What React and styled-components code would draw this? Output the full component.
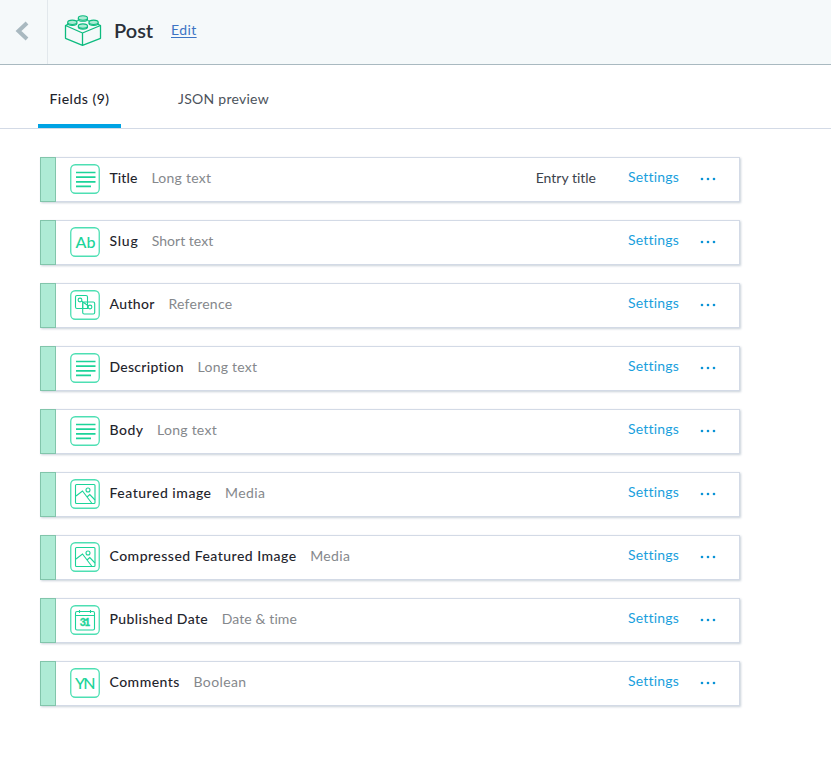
import React from "react";
import styled, { createGlobalStyle } from "styled-components";

const GlobalStyle = createGlobalStyle`
  * { box-sizing: border-box; }
  body {
    margin: 0;
    background: #fff;
    color: #2a3039;
    font-family: Lato, "Open Sans", sans-serif;
    font-size: 14px;
    font-variant-ligatures: none;
  }
`;

const Page = styled.div`
  min-height: 777px;
`;

const Header = styled.header`
  display: flex;
  height: 65px;
  background: #f5f9fa;
  border-bottom: 1px solid #a9b9c0;
`;

const BackButton = styled.button`
  width: 48px;
  padding: 0 0 3px 15px;
  border: 0;
  border-right: 1px solid #e2e8ec;
  background: transparent;
  display: flex;
  align-items: center;
`;

const Heading = styled.div`
  display: flex;
  align-items: center;
  padding: 0 0 3px 16px;
`;

const Title = styled.h1`
  margin: 0 0 2px 12px;
  width: 57px;
  font-size: 20px;
  line-height: 24px;
  font-weight: 600;
`;

const EditLink = styled.a`
  margin-bottom: 2px;
  color: #3c74c4;
  font-size: 14px;
  line-height: 20px;
  font-weight: 400;
  text-decoration: underline;
  text-underline-offset: 2px;
  letter-spacing: 0.4px;
`;

const Tabs = styled.nav`
  display: flex;
  height: 64px;
  padding-left: 38px;
  border-bottom: 1px solid #d3dae6;
`;

const Tab = styled.div`
  width: ${(p) => p.$width}px;
  margin-right: 42px;
  padding-top: 24px;
  text-align: center;
  line-height: 20px;
  white-space: nowrap;
  font-weight: ${(p) => (p.$active ? 500 : 400)};
  color: ${(p) => (p.$active ? "#1f252d" : "#4c535c")};
  border-bottom: ${(p) => (p.$active ? "4px solid #00a3e4" : "0")};
  letter-spacing: ${(p) => p.$track || 0}px;
`;

const FieldList = styled.ul`
  list-style: none;
  margin: 0;
  padding: 28px 0 0 40px;
  display: flex;
  flex-direction: column;
  gap: 18px;
`;

const FieldRow = styled.li`
  display: flex;
  align-items: center;
  width: 700px;
  height: 45px;
  border: 1px solid #d3dae6;
  border-left: 0;
  box-shadow: 1px 1px 2px rgba(90, 115, 140, 0.32);
  white-space: nowrap;
  line-height: 20px;
`;

const DragHandle = styled.div`
  align-self: stretch;
  width: 16px;
  margin: -1px 14px -1px 0;
  background: #aeebd5;
  border: 1px solid #82c5ab;
`;

const FieldName = styled.span`
  margin: 0 ${(p) => 14 - p.$track}px 3px 9.5px;
  color: #1f252d;
  font-weight: 500;
  letter-spacing: ${(p) => p.$track}px;
`;

const FieldType = styled.span`
  margin-bottom: 3px;
  color: #85888c;
  font-weight: 400;
  letter-spacing: ${(p) => p.$track}px;
`;

const Actions = styled.div`
  margin-left: auto;
  display: flex;
  align-items: center;
  padding-right: 23px;
`;

const EntryTitle = styled.span`
  margin: 0 32px 3px 0;
  color: #3c434c;
`;

const SettingsLink = styled.a`
  width: 72px;
  margin-bottom: 5px;
  color: #1a9fdd;
  letter-spacing: 0.2px;
`;

const IconBox = styled.svg`
  margin-bottom: 2px;
`;

const MoreIcon = styled.svg`
  margin-bottom: 1px;
`;

const IconText = styled.text`
  font-family: Lato, sans-serif;
  font-weight: ${(p) => p.$weight || 500};
  fill: #1bd499;
`;

const GREEN = "#1bd499";

const glyphs = {
  long: (
    <path stroke={GREEN} strokeWidth="1.700" d="M6 8.500h19.500M6 13.200h19.500M6 17.800h19.500M6 22.300h15" />
  ),
  short: <IconText x="5.500" y="20.800" fontSize="16" textLength="20">Ab</IconText>,
  bool: <IconText x="5" y="20.800" fontSize="16" textLength="20.500">YN</IconText>,
  ref: (
    <g stroke={GREEN} strokeWidth="1.100">
      <path d="M17.500 12V7a1.500 1.500 0 0 0-1.500-1.500H7A1.500 1.500 0 0 0 5.500 7v10A1.500 1.500 0 0 0 7 18.500h5.500" />
      <rect x="12.700" y="12" width="12" height="12" rx="1.500" />
      <circle cx="10" cy="10" r="1.900" />
      <circle cx="20" cy="17" r="1.900" />
      <path d="M11.500 11l7 5M12.700 12v6.500M17.500 12v6.500h-4.800" />
    </g>
  ),
  media: (
    <g stroke={GREEN} strokeWidth="1.100">
      <rect x="5.500" y="5.500" width="19.500" height="19" rx="1" />
      <circle cx="18" cy="11" r="2" />
      <path d="M6 17l6.500-5L22 24.500M17 18l2.800-2.500 5.200 5.500" />
    </g>
  ),
  date: (
    <g stroke={GREEN} strokeWidth="1.100">
      <rect x="5.500" y="6.500" width="19" height="18.500" rx="1.500" />
      <path d="M5.500 10.500h19M9.500 5v3M20.500 5v3" />
      <IconText x="9.800" y="21" fontSize="10.500" textLength="10.500" $weight={900} stroke="#1bd499" strokeWidth="0.300">31</IconText>
    </g>
  ),
};

const FieldIcon = ({ kind }) => (
  <IconBox width="30" height="30" viewBox="0 0 30 30" fill="none">
    <rect x="0.750" y="0.750" width="28.500" height="28.500" rx="4.500" stroke="#4edfb3" strokeWidth="1.300" />
    {glyphs[kind]}
  </IconBox>
);

const BrickIcon = () => (
  <svg width="38" height="32" viewBox="0 0 38 32" fill="none" stroke="#0dbb7f" strokeWidth="1.300" strokeLinejoin="round">
    <path d="M4 9.300L1.500 10.500v12.800L18.500 30.300l18-7V10.500l-3-1.300M1.500 10.500l17 7.500 18-7.500M18.500 18v12.300M14.300 5.500l-3 1M23.500 5.500l3 1" />
    <g fill="#aeebd5" strokeWidth="1.100">
      <path d="M14.300 3.200v1.300c0 2.400 9.200 2.400 9.200 0V3.200M3.700 7.500v1c0 2.500 9.200 2.500 9.200 0v-1M25 7.500v1c0 2.500 9.200 2.500 9.200 0v-1M14.300 11.200v1c0 2.500 9.200 2.500 9.200 0v-1" />
      <ellipse cx="18.900" cy="3" rx="4.600" ry="2.200" />
      <ellipse cx="8.300" cy="7.300" rx="4.600" ry="2.200" />
      <ellipse cx="29.600" cy="7.300" rx="4.600" ry="2.200" />
      <ellipse cx="18.900" cy="11.100" rx="4.600" ry="2.200" />
    </g>
  </svg>
);

const fields = [
  { name: "Title", type: "Long text", kind: "long", nameTrack: 0.1, typeTrack: 0.25, entry: true },
  { name: "Slug", type: "Short text", kind: "short", nameTrack: 0.75, typeTrack: 0.03 },
  { name: "Author", type: "Reference", kind: "ref", nameTrack: 0.35, typeTrack: 0.25 },
  { name: "Description", type: "Long text", kind: "long", nameTrack: 0.27, typeTrack: 0.25 },
  { name: "Body", type: "Long text", kind: "long", nameTrack: 0.5, typeTrack: 0.25 },
  { name: "Featured image", type: "Media", kind: "media", nameTrack: 0.52, typeTrack: 0.4 },
  { name: "Compressed Featured Image", type: "Media", kind: "media", nameTrack: 0.48, typeTrack: 0.4 },
  { name: "Published Date", type: "Date & time", kind: "date", nameTrack: 0.37, typeTrack: 0.1 },
  { name: "Comments", type: "Boolean", kind: "bool", nameTrack: 0.48, typeTrack: 0.4 },
];

export default function App() {
  return (
    <Page>
      <GlobalStyle />
      <Header>
        <BackButton aria-label="Back">
          <svg width="14" height="20" viewBox="0 0 14 20" fill="none">
            <path d="M12 2L3.500 10l8.500 8" stroke="#a9b9c0" strokeWidth="4" />
          </svg>
        </BackButton>
        <Heading>
          <BrickIcon />
          <Title>Post</Title>
          <EditLink>Edit</EditLink>
        </Heading>
      </Header>
      <Tabs>
        <Tab $active $width={83} $track={0.5}>Fields (9)</Tab>
        <Tab $width={121} $track={0.25}>JSON preview</Tab>
      </Tabs>
      <FieldList>
        {fields.map((f) => (
          <FieldRow key={f.name}>
            <DragHandle />
            <FieldIcon kind={f.kind} />
            <FieldName $track={f.nameTrack}>{f.name}</FieldName>
            <FieldType $track={f.typeTrack}>{f.type}</FieldType>
            <Actions>
              {f.entry && <EntryTitle>Entry title</EntryTitle>}
              <SettingsLink>Settings</SettingsLink>
              <MoreIcon width="16" height="4" viewBox="0 0 16 4" fill="#0a93d6">
                <circle cx="2" cy="2" r="1.300" />
                <circle cx="8" cy="2" r="1.300" />
                <circle cx="14" cy="2" r="1.300" />
              </MoreIcon>
            </Actions>
          </FieldRow>
        ))}
      </FieldList>
    </Page>
  );
}
